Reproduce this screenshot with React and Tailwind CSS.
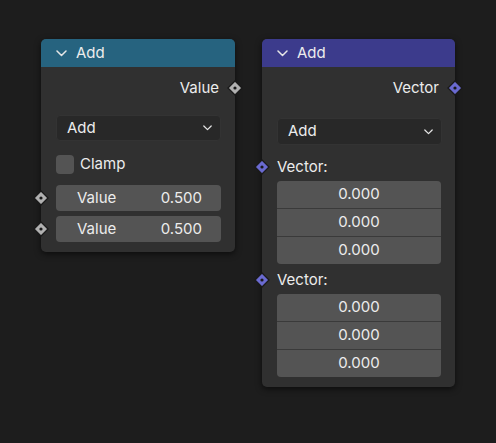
import React from 'react';

const font = { fontFamily: 'Inter, "DejaVu Sans", sans-serif' };

const Socket = ({ color = '#b0b0b0', className = '' }) => (
  <svg width="16" height="16" viewBox="0 0 16 16" className={`absolute ${className}`}>
    <polygon points="8,1 15,8 8,15 1,8" fill={color} stroke="#1a1a1a" strokeWidth="1.3" />
    <circle cx="8" cy="8" r="1.6" fill="#1a1a1a" />
  </svg>
);

const Chevron = ({ className = '' }) => (
  <svg width="11" height="7" viewBox="0 0 11 7" className={className}>
    <polyline points="1,1 5.5,5.5 10,1" fill="none" stroke="currentColor" strokeWidth="1.5" strokeLinecap="round" strokeLinejoin="round" />
  </svg>
);

const Header = ({ color }) => (
  <div className={`h-[28px] flex items-center pl-[15px] rounded-t-[5px] text-[#ececec] text-[15px] ${color}`}>
    <Chevron className="mr-[9px] text-[#e6e6e6]" />
    <span>Add</span>
  </div>
);

const Dropdown = ({ className = '' }) => (
  <div className={`h-[26px] flex items-center justify-between pl-[10px] pr-[8px] rounded-[4px] bg-[#282828] border border-[#333333] text-[15px] text-[#ececec] ${className}`}>
    <span>Add</span>
    <Chevron className="w-[9px] h-[6px] text-[#e6e6e6]" />
  </div>
);

const VectorBox = () => (
  <div className="rounded-[4px] overflow-hidden flex flex-col gap-px bg-[#3a3a3a] text-[15px] text-[#ececec]">
    {['0.000', '0.000', '0.000'].map((v, i) => (
      <div key={i} className="h-[27px] flex items-center justify-center bg-[#545454]">{v}</div>
    ))}
  </div>
);

export default function App() {
  return (
    <div className="w-[496px] h-[443px] bg-[#1d1d1d] flex items-start gap-[27px] pl-[41px] pt-[39px]" style={font}>
      {/* Math node */}
      <div className="w-[194px] bg-[#303030] rounded-[5px] shadow-[0_2px_6px_rgba(0,0,0,0.6)] pb-[10px]">
        <Header color="bg-[#26637f]" />
        <div className="relative h-[22px] mt-[10px] flex items-center justify-end pr-[16px] text-[15px] text-[#ececec]">
          Value
          <Socket className="right-[-8px] top-[3px]" />
        </div>
        <Dropdown className="mt-[16px] ml-[15px] mr-[14px]" />
        <div className="mt-[14px] ml-[15px] flex items-center gap-[6px] h-[19px] text-[15px] text-[#ececec]">
          <div className="w-[18px] h-[19px] rounded-[4px] bg-[#545454]" />
          Clamp
        </div>
        <div className="mt-[11px] mx-[15px] mr-[14px] flex flex-col gap-[5px] text-[15px] text-[#ececec]">
          {[0, 1].map((i) => (
            <div key={i} className="relative h-[26px] flex items-center justify-between pl-[21px] pr-[19px] rounded-[4px] bg-[#545454]">
              <span>Value</span>
              <span>0.500</span>
              <Socket className="left-[-23px] top-[5px]" />
            </div>
          ))}
        </div>
      </div>

      {/* Vector math node */}
      <div className="w-[193px] bg-[#303030] rounded-[5px] shadow-[0_2px_6px_rgba(0,0,0,0.6)] pb-[10px]">
        <Header color="bg-[#3c3b8c]" />
        <div className="relative h-[22px] mt-[10px] flex items-center justify-end pr-[16px] text-[15px] text-[#ececec]">
          Vector
          <Socket color="#6a6ad0" className="right-[-8px] top-[3px]" />
        </div>
        <Dropdown className="mt-[19px] ml-[15px] mr-[13px] h-[27px]" />
        {[0, 1].map((i) => (
          <div key={i} className={i === 0 ? 'mt-[11px]' : 'mt-[5px]'}>
            <div className="relative h-[22px] flex items-center pl-[15px] text-[15px] text-[#ececec]">
              Vector:
              <Socket color="#6a6ad0" className="left-[-8px] top-[3px]" />
            </div>
            <div className="mt-[3px] ml-[15px] mr-[14px]">
              <VectorBox />
            </div>
          </div>
        ))}
      </div>
    </div>
  );
}
